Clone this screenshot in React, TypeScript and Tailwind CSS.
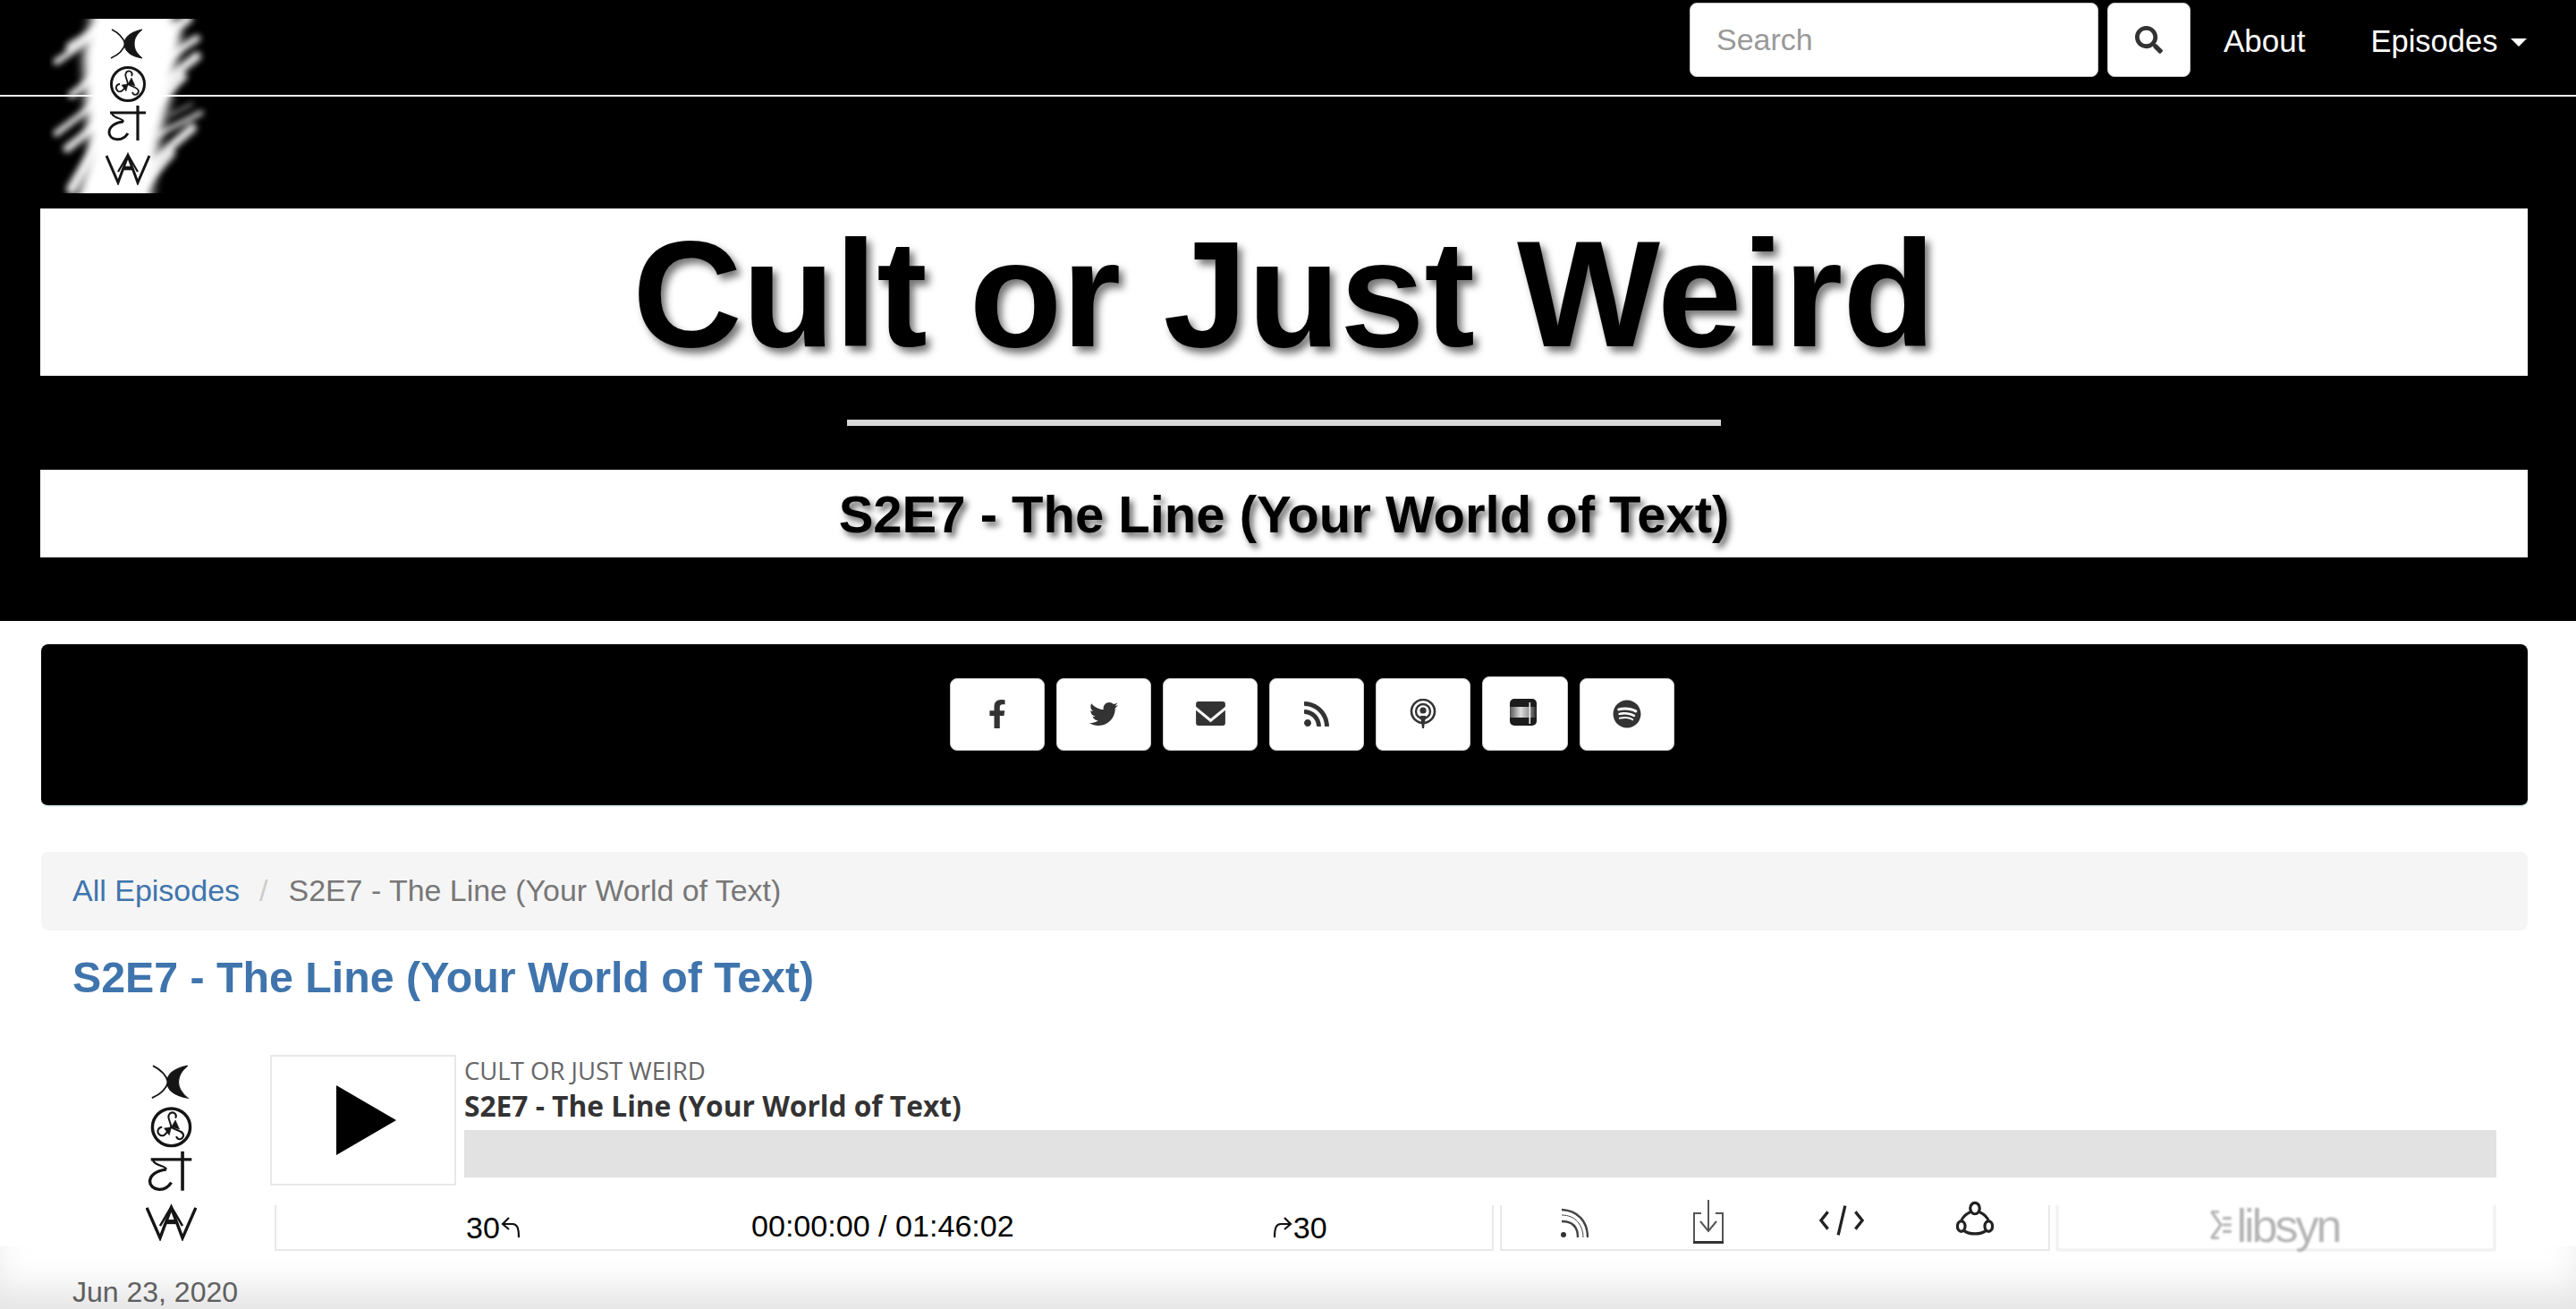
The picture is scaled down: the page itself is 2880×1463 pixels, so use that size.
import { FaFacebookF, FaTwitter, FaRss, FaSpotify, FaSearch } from "react-icons/fa";

function Mark({ className }: { className: string }) {
  return (
    <svg viewBox="0 0 50 175" preserveAspectRatio="none" className={className} fill="none" stroke="#151515">
      <path d="M41 1C27 4 21 10 21 17C21 25 28 31 41 33C35 28 32 23 32 17C32 11 35 6 41 1Z" fill="#151515" strokeWidth="1" />
      <path d="M7 1C15 5 20 11 22 17C20 24 15 29 6 33" strokeWidth="1.6" />
      <circle cx="25" cy="62" r="18.5" strokeWidth="3" />
      <path d="M25 62C24 55 20 52 24 48C28 46 31 50 29 53" strokeWidth="1.8" />
      <path d="M25 62C31 66 36 65 37 70C36 75 31 75 30 71" strokeWidth="1.8" />
      <path d="M25 62C20 67 19 72 14 70C10 67 12 62 16 62" strokeWidth="1.8" />
      <path d="M25 62L29 55L33 64Z M25 62L18 63L23 70Z" fill="#151515" strokeWidth="0.5" />
      <path d="M5 94H45" strokeWidth="3" />
      <path d="M36 86V125" strokeWidth="3.2" />
      <path d="M7 95C10 101 20 100 20 104" strokeWidth="2" />
      <path d="M20 104C10 105 4 110 4 116C4 124 18 128 25 117" strokeWidth="3" />
      <path d="M1 142L14 172L25 142L36 172L49 142" strokeWidth="3" />
      <path d="M14 160L25 141L36 160" strokeWidth="2.2" />
      <path d="M20 156H30" strokeWidth="4.5" />
    </svg>
  );
}

function HeaderLogo() {
  return (
    <div className="absolute left-[55px] top-[21px] h-[195px] w-[180px] overflow-hidden">
      <svg viewBox="0 0 180 195" className="h-full w-full">
        <defs>
          <filter id="smear" x="-20%" y="-20%" width="140%" height="140%">
            <feGaussianBlur stdDeviation="6" />
          </filter>
          <filter id="smearFine" x="-20%" y="-20%" width="140%" height="140%">
            <feGaussianBlur stdDeviation="3.5" />
          </filter>
        </defs>
        <g filter="url(#smear)">
          <path d="M50 -15H135L148 20L135 90L125 130L112 210H28L45 150L40 90L38 40Z" fill="white" />
        </g>
        <g filter="url(#smearFine)" stroke="white" strokeLinecap="round" opacity="0.9">
          <path d="M8 48L65 10" strokeWidth="7" />
          <path d="M25 32L75 2" strokeWidth="13" />
          <path d="M25 85L70 52" strokeWidth="8" />
          <path d="M8 128L65 85" strokeWidth="7" />
          <path d="M20 145L70 105" strokeWidth="9" />
          <path d="M25 190L55 140" strokeWidth="12" />
          <path d="M100 40L155 0" strokeWidth="11" />
          <path d="M105 60L165 22" strokeWidth="8" />
          <path d="M110 85L165 42" strokeWidth="10" />
          <path d="M105 105L150 65" strokeWidth="9" />
          <path d="M120 130L170 105" strokeWidth="5" />
          <path d="M110 165L160 122" strokeWidth="10" />
          <path d="M100 190L135 150" strokeWidth="12" />
          <path d="M135 108L160 95" strokeWidth="2" />
        </g>
      </svg>
      <Mark className="absolute left-[63px] top-[11px] h-[175px] w-[50px]" />
    </div>
  );
}

function EnvelopeIcon() {
  return (
    <svg viewBox="0 0 34 28" className="h-[27px] w-[35px]">
      <path d="M3 0H31C33 0 34 1 34 3V6L17 20L0 6V3C0 1 1 0 3 0Z" fill="#333" />
      <path d="M0 10L17 24L34 10V25C34 27 33 28 31 28H3C1 28 0 27 0 25Z" fill="#333" />
    </svg>
  );
}

function PodcastIcon() {
  return (
    <svg viewBox="0 0 30 34" className="h-[34px] w-[30px]" fill="none" stroke="#333">
      <circle cx="15" cy="14" r="13" strokeWidth="2.6" />
      <circle cx="15" cy="14" r="8" strokeWidth="2.4" />
      <circle cx="15" cy="13" r="3.6" fill="#333" stroke="none" />
      <path d="M12 19H18L16 33H14Z" fill="#333" stroke="none" />
    </svg>
  );
}

function StitcherIcon() {
  return (
    <svg viewBox="0 0 30 30" className="h-[30px] w-[30px]">
      <defs>
        <linearGradient id="st" x1="0" x2="1" y1="0" y2="0">
          <stop offset="0" stopColor="#555" />
          <stop offset="0.4" stopColor="#ddd" />
          <stop offset="0.7" stopColor="#999" />
          <stop offset="1" stopColor="#222" />
        </linearGradient>
      </defs>
      <rect x="0" y="0" width="30" height="30" rx="5" fill="#1c1c1c" />
      <rect x="0" y="9" width="30" height="12" fill="url(#st)" />
      <rect x="21.5" y="4" width="1.6" height="24" fill="#eee" />
    </svg>
  );
}

function SocialButton({ children, tall }: { children: React.ReactNode; tall?: boolean }) {
  return (
    <div
      className={
        tall
          ? "-mt-[2px] flex h-[83px] w-[96px] items-center justify-center rounded-lg border border-[#ccc] bg-white pr-[4px] pb-[4px]"
          : "flex h-[81px] w-[106px] items-center justify-center rounded-lg border border-[#ccc] bg-white pb-[2px] text-[32px] text-[#333]"
      }
    >
      {children}
    </div>
  );
}

function RssOutline() {
  return (
    <svg viewBox="0 0 32 36" className="h-[36px] w-[32px]" fill="none" stroke="#444" strokeWidth="2.4">
      <circle cx="4" cy="31" r="3" fill="#333" stroke="none" />
      <path d="M2 16C14 16 20 22 20 34" />
      <path d="M2 3C20 4 31 16 31 34" />
      <path d="M2 9C17 9 26 20 26 34" strokeWidth="1" />
    </svg>
  );
}

function DownloadOutline() {
  return (
    <svg viewBox="0 0 36 50" className="h-[50px] w-[36px]" fill="none" stroke="#555">
      <path d="M10 15H2V47H34V15H26" strokeWidth="2" />
      <path d="M1 47.5H35" strokeWidth="3.2" stroke="#333" />
      <path d="M18 0V34M9 24L18 35L27 24" strokeWidth="2" />
    </svg>
  );
}

function CodeOutline() {
  return (
    <svg viewBox="0 0 52 36" className="h-[36px] w-[50px]" fill="none" stroke="#222" strokeWidth="3.4">
      <path d="M10 8L2 18L10 28" />
      <path d="M42 8L50 18L42 28" />
      <path d="M30 1L22 35" />
    </svg>
  );
}

function ShareOutline() {
  return (
    <svg viewBox="0 0 44 40" className="h-[40px] w-[42px]" fill="none" stroke="#222" strokeWidth="3.4">
      <ellipse cx="22" cy="8" rx="5.5" ry="6.5" />
      <ellipse cx="6" cy="29" rx="4.5" ry="6" />
      <ellipse cx="38" cy="29" rx="4.5" ry="6" />
      <path d="M17 12C11 15 7 19 6 23" />
      <path d="M27 12C33 15 37 19 38 23" />
      <path d="M9 34C16 39 28 39 35 34" />
    </svg>
  );
}

export default function App() {
  return (
    <div className="relative h-[1463px] overflow-hidden bg-white font-['Liberation_Sans',Arial,sans-serif]">
      <header className="bg-black">
        <nav className="flex h-[108px] items-start border-b-2 border-[#f4f4f4] pt-[3px] pl-[1889px]">
          <div className="flex h-[83px] w-[457px] items-center rounded-lg border border-[#ccc] bg-white pl-[29px] text-[34px] text-[#999]">
            Search
          </div>
          <div className="ml-[10px] flex h-[83px] w-[93px] items-center justify-center rounded-lg border border-[#ccc] bg-white text-[31px] text-[#333]">
            <FaSearch />
          </div>
          <span className="ml-[37px] mt-[23px] text-[35px] leading-[40px] text-white">About</span>
          <span className="ml-[73px] mt-[23px] text-[34.5px] leading-[40px] text-white">Episodes</span>
          <span className="ml-[15px] mt-[40px] h-0 w-0 border-x-[9px] border-t-[9px] border-x-transparent border-t-white" />
        </nav>
        <div className="pt-[125px] pr-[54px] pb-[71px] pl-[45px]">
          <div className="flex h-[187px] items-center justify-center bg-white pt-[5px] text-[169.5px] leading-none font-bold text-black [text-shadow:5px_6px_8px_rgba(0,0,0,0.55)]">
            Cult or Just Weird
          </div>
          <div className="mx-auto mt-[49px] h-[7px] w-[977px] bg-[#d8d8d8]" />
          <div className="mt-[49px] flex h-[98px] items-center justify-center bg-white pt-[1px] text-[58px] leading-none font-bold text-black [text-shadow:4px_5px_7px_rgba(0,0,0,0.6)]">
            S2E7 - The Line (Your World of Text)
          </div>
        </div>
      </header>

      <HeaderLogo />

      <main className="pt-[26px] pr-[54px] pl-[46px]">
        <div className="flex h-[182px] items-start gap-[13px] rounded-lg border-b-2 border-[#dff0f0] bg-black pt-[38px] pl-[1016px]">
          <SocialButton><FaFacebookF /></SocialButton>
          <SocialButton><FaTwitter /></SocialButton>
          <SocialButton><EnvelopeIcon /></SocialButton>
          <SocialButton><FaRss /></SocialButton>
          <SocialButton><PodcastIcon /></SocialButton>
          <SocialButton tall><StitcherIcon /></SocialButton>
          <SocialButton><FaSpotify /></SocialButton>
        </div>

        <div className="mt-[50px] flex h-[88px] items-center rounded-lg bg-[#f5f5f5] pb-[2px] pl-[35px] text-[34px] text-[#777]">
          <span className="text-[#3f74ad]">All Episodes</span>
          <span className="mx-[22px] text-[#ccc]">/</span>
          <span className="ml-[1px] text-[33.9px]">S2E7 - The Line (Your World of Text)</span>
        </div>

        <h1 className="mt-[24px] pl-[35px] text-[48.3px] leading-[56px] font-bold text-[#3f74ad]">
          S2E7 - The Line (Your World of Text)
        </h1>

        <section className="mt-[59px] flex">
          <Mark className="mt-[11px] ml-[117px] h-[197px] w-[57px] shrink-0" />
          <div className="ml-[82px] flex-1">
            <div className="flex">
              <div className="flex h-[146px] w-[208px] items-center justify-center border-2 border-[#e8e8e8]">
                <div className="ml-[6px] h-0 w-0 border-y-[39px] border-l-[67px] border-y-transparent border-l-black" />
              </div>
              <div className="ml-[9px] flex-1 pr-[35px] font-['Open_Sans',sans-serif]">
                <div className="pt-[2px] text-[27.5px] leading-[32px] text-[#666]">CULT OR JUST WEIRD</div>
                <div className="mt-[5px] text-[31.7px] leading-[36px] font-bold text-[#333]">S2E7 - The Line (Your World of Text)</div>
                <div className="mt-[9px] h-[53px] bg-[#e2e2e2]" />
              </div>
            </div>
            <div className="mt-[22px] mr-[35px] ml-[5px] flex h-[51px] text-[34px] leading-[40px] text-black">
              <div className="flex w-[1363px] border-x-2 border-b-2 border-[#e8e8e8] pt-[1px]">
                <span className="ml-[212px] flex w-[65px] items-center">
                  30
                  <svg viewBox="0 0 22 24" className="ml-[1px] h-[24px] w-[22px]" fill="none" stroke="#111" strokeWidth="2.2">
                    <path d="M9 1L2 8L9 14" />
                    <path d="M2 8H13C18 8 20 12 20 23" />
                  </svg>
                </span>
                <span className="mt-[2px] ml-[254px] text-[34.1px]">00:00:00 / 01:46:02</span>
                <span className="ml-[289px] flex items-center">
                  <svg viewBox="0 0 22 24" className="mr-[1px] h-[24px] w-[22px]" fill="none" stroke="#111" strokeWidth="2.2">
                    <path d="M13 1L20 8L13 14" />
                    <path d="M20 8H9C4 8 2 12 2 23" />
                  </svg>
                  30
                </span>
              </div>
              <div className="relative ml-[7px] w-[615px] border-x-2 border-b-2 border-[#e8e8e8]">
                <span className="absolute left-[65px] top-[2px]"><RssOutline /></span>
                <span className="absolute left-[213px] top-[-6px]"><DownloadOutline /></span>
                <span className="absolute left-[355px] top-[-1px]"><CodeOutline /></span>
                <span className="absolute left-[508px] top-[-5px]"><ShareOutline /></span>
              </div>
              <div className="ml-[7px] flex w-[491px] items-start justify-center border-x-2 border-b-2 border-[#e8e8e8] pr-[6px] text-[52px] leading-[46px] tracking-[-3px] text-[#b4b4b4] blur-[1px]">
                <svg viewBox="0 0 24 30" className="mt-[6px] mr-[3px] h-[32px] w-[30px]" fill="none" stroke="#b4b4b4" strokeWidth="3">
                  <path d="M2 1L12 15L2 29M2 1H10M2 29H10M14 8H23M14 15H23M14 22H23" />
                </svg>
                libsyn
              </div>
            </div>
          </div>
        </section>

        <p className="mt-[23px] pl-[35px] text-[32px] leading-[46px] text-[#666]">Jun 23, 2020</p>
      </main>

      <div className="pointer-events-none absolute inset-x-0 bottom-0 h-[70px] shadow-[inset_0_-30px_40px_-8px_rgba(0,0,0,0.11)]" />
    </div>
  );
}
